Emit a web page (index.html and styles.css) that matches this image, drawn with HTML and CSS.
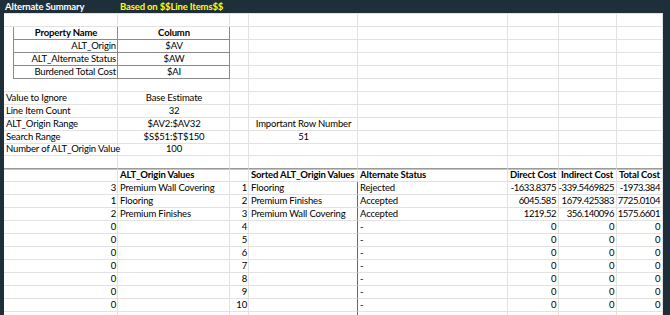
FILE: index.html
```html
<!DOCTYPE html>
<html>
<head>
<meta charset="utf-8">
<link rel="stylesheet" href="styles.css">
</head>
<body>
<div class="bar"><span class="t1">Alternate Summary</span><span class="t2">Based on $$Line Items$$</span></div>
<div class="sheet">
  <div class="props">
    <div class="pc b m">Property Name</div><div class="pc b m">Column</div>
    <div class="pc r">ALT_Origin</div><div class="pc m">$AV</div>
    <div class="pc r">ALT_Alternate Status</div><div class="pc m">$AW</div>
    <div class="pc r">Burdened Total Cost</div><div class="pc m">$AI</div>
  </div>
  <!-- row 1 -->
  <div class="c"></div><div class="c"></div><div class="c"></div><div class="c"></div><div class="c"></div><div class="c"></div><div class="c"></div><div class="c"></div>
  <!-- rows 2-5 (columns C-H) -->
  <div class="c"></div><div class="c"></div><div class="c"></div><div class="c"></div><div class="c"></div><div class="c"></div>
  <div class="c"></div><div class="c"></div><div class="c"></div><div class="c"></div><div class="c"></div><div class="c"></div>
  <div class="c"></div><div class="c"></div><div class="c"></div><div class="c"></div><div class="c"></div><div class="c"></div>
  <div class="c"></div><div class="c"></div><div class="c"></div><div class="c"></div><div class="c"></div><div class="c"></div>
  <!-- row 6 -->
  <div class="c"></div><div class="c"></div><div class="c"></div><div class="c"></div><div class="c"></div><div class="c"></div><div class="c"></div><div class="c"></div>
  <!-- row 7 -->
  <div class="c">Value to Ignore</div><div class="c m">Base Estimate</div><div class="c"></div><div class="c"></div><div class="c"></div><div class="c"></div><div class="c"></div><div class="c"></div>
  <!-- row 8 -->
  <div class="c">Line Item Count</div><div class="c m">32</div><div class="c"></div><div class="c"></div><div class="c"></div><div class="c"></div><div class="c"></div><div class="c"></div>
  <!-- row 9 -->
  <div class="c">ALT_Origin Range</div><div class="c m">$AV2:$AV32</div><div class="c"></div><div class="c m">Important Row Number</div><div class="c"></div><div class="c"></div><div class="c"></div><div class="c"></div>
  <!-- row 10 -->
  <div class="c">Search Range</div><div class="c m">$S$51:$T$150</div><div class="c"></div><div class="c m">51</div><div class="c"></div><div class="c"></div><div class="c"></div><div class="c"></div>
  <!-- row 11 -->
  <div class="c">Number of ALT_Origin Value</div><div class="c m">100</div><div class="c"></div><div class="c"></div><div class="c"></div><div class="c"></div><div class="c"></div><div class="c"></div>
  <!-- row 12 -->
  <div class="c p"></div><div class="c p"></div><div class="c p"></div><div class="c p"></div><div class="c p"></div><div class="c p"></div><div class="c p"></div><div class="c p"></div>
  <!-- row 13 header -->
  <div class="c h"></div><div class="c h b">ALT_Origin Values</div><div class="c h"></div><div class="c h b">Sorted ALT_Origin Values</div><div class="c h b">Alternate Status</div><div class="c h b">Direct Cost</div><div class="c h b">Indirect Cost</div><div class="c h b">Total Cost</div>
  <!-- data rows -->
  <div class="c r">3</div><div class="c">Premium Wall Covering</div><div class="c r">1</div><div class="c d">Flooring</div><div class="c">Rejected</div><div class="c r n">-1633.8375</div><div class="c r n">-339.5469825</div><div class="c r n">-1973.384</div>
  <div class="c r">1</div><div class="c">Flooring</div><div class="c r">2</div><div class="c d">Premium Finishes</div><div class="c">Accepted</div><div class="c r n">6045.585</div><div class="c r n">1679.425383</div><div class="c r n">7725.0104</div>
  <div class="c r">2</div><div class="c">Premium Finishes</div><div class="c r">3</div><div class="c d">Premium Wall Covering</div><div class="c">Accepted</div><div class="c r n">1219.52</div><div class="c r n">356.140096</div><div class="c r n">1575.6601</div>
  <div class="c r">0</div><div class="c"></div><div class="c r">4</div><div class="c d"></div><div class="c">-</div><div class="c r n">0</div><div class="c r n">0</div><div class="c r n">0</div>
  <div class="c r">0</div><div class="c"></div><div class="c r">5</div><div class="c d"></div><div class="c">-</div><div class="c r n">0</div><div class="c r n">0</div><div class="c r n">0</div>
  <div class="c r">0</div><div class="c"></div><div class="c r">6</div><div class="c d"></div><div class="c">-</div><div class="c r n">0</div><div class="c r n">0</div><div class="c r n">0</div>
  <div class="c r">0</div><div class="c"></div><div class="c r">7</div><div class="c d"></div><div class="c">-</div><div class="c r n">0</div><div class="c r n">0</div><div class="c r n">0</div>
  <div class="c r">0</div><div class="c"></div><div class="c r">8</div><div class="c d"></div><div class="c">-</div><div class="c r n">0</div><div class="c r n">0</div><div class="c r n">0</div>
  <div class="c r">0</div><div class="c"></div><div class="c r">9</div><div class="c d"></div><div class="c">-</div><div class="c r n">0</div><div class="c r n">0</div><div class="c r n">0</div>
  <div class="c r">0</div><div class="c"></div><div class="c r">10</div><div class="c d"></div><div class="c">-</div><div class="c r n">0</div><div class="c r n">0</div><div class="c r n">0</div>
  <!-- row 24 (partial) -->
  <div class="c"></div><div class="c"></div><div class="c"></div><div class="c d"></div><div class="c"></div><div class="c"></div><div class="c"></div><div class="c"></div>
</div>
</body>
</html>
```
FILE: styles.css
```css
* { box-sizing: border-box; margin: 0; padding: 0; }
html, body { width: 670px; height: 315px; overflow: hidden; }
body {
  background: #1f2f3a;
  font-family: "Lato", "Noto Sans", sans-serif;
  font-size: 9.5px;
  letter-spacing: -0.15px;
  color: #000;
}
.bar {
  height: 13px;
  display: grid;
  grid-template-columns: 114px 300px;
  padding-left: 4px;
  color: #fff;
  font-weight: 700;
  line-height: 13px;
}
.bar .t1 { padding-left: 1px; }
.bar .t2 { padding-left: 2px; color: #ffff00; }
.sheet {
  margin-left: 4px;
  width: 659px;
  height: 302px;
  overflow: hidden;
  background: #fff;
  border-top: 1px solid #e2e2e2;
  display: grid;
  grid-template-columns: 114px 112px 19px 109px 150px 51px 58px 46px;
  grid-auto-rows: 12.96px;
}
.c {
  display: flex;
  align-items: flex-end;
  border-right: 1px solid #e2e2e2;
  border-bottom: 1px solid #e2e2e2;
  padding: 0 1px 0 2px;
  white-space: nowrap;
  line-height: 12px;
  min-width: 0;
}
.r { justify-content: flex-end; }
.m { justify-content: center; }
.b { font-weight: 700; }
.n { letter-spacing: -0.45px; padding-right: 2px; }
.p { border-bottom-color: #9a9a9a; }
.h { box-shadow: inset 0 1px 0 #c4c4c4; }
.d { border-right-color: #6a6a6a; }
.props {
  grid-column: 1 / 3;
  grid-row: 2 / 6;
  margin-left: 9px;
  margin-top: -1px;
  display: grid;
  grid-template-columns: 105px 112px;
  grid-template-rows: repeat(4, 1fr);
  border-top: 1px solid #8a8a8a;
  background: #fff;
}
.pc {
  display: flex;
  align-items: flex-end;
  border-right: 1px solid #8a8a8a;
  border-bottom: 1px solid #8a8a8a;
  padding: 0 1px 0 2px;
  white-space: nowrap;
  line-height: 12px;
}
.pc:nth-child(odd) { border-left: 1px solid #8a8a8a; }
```
